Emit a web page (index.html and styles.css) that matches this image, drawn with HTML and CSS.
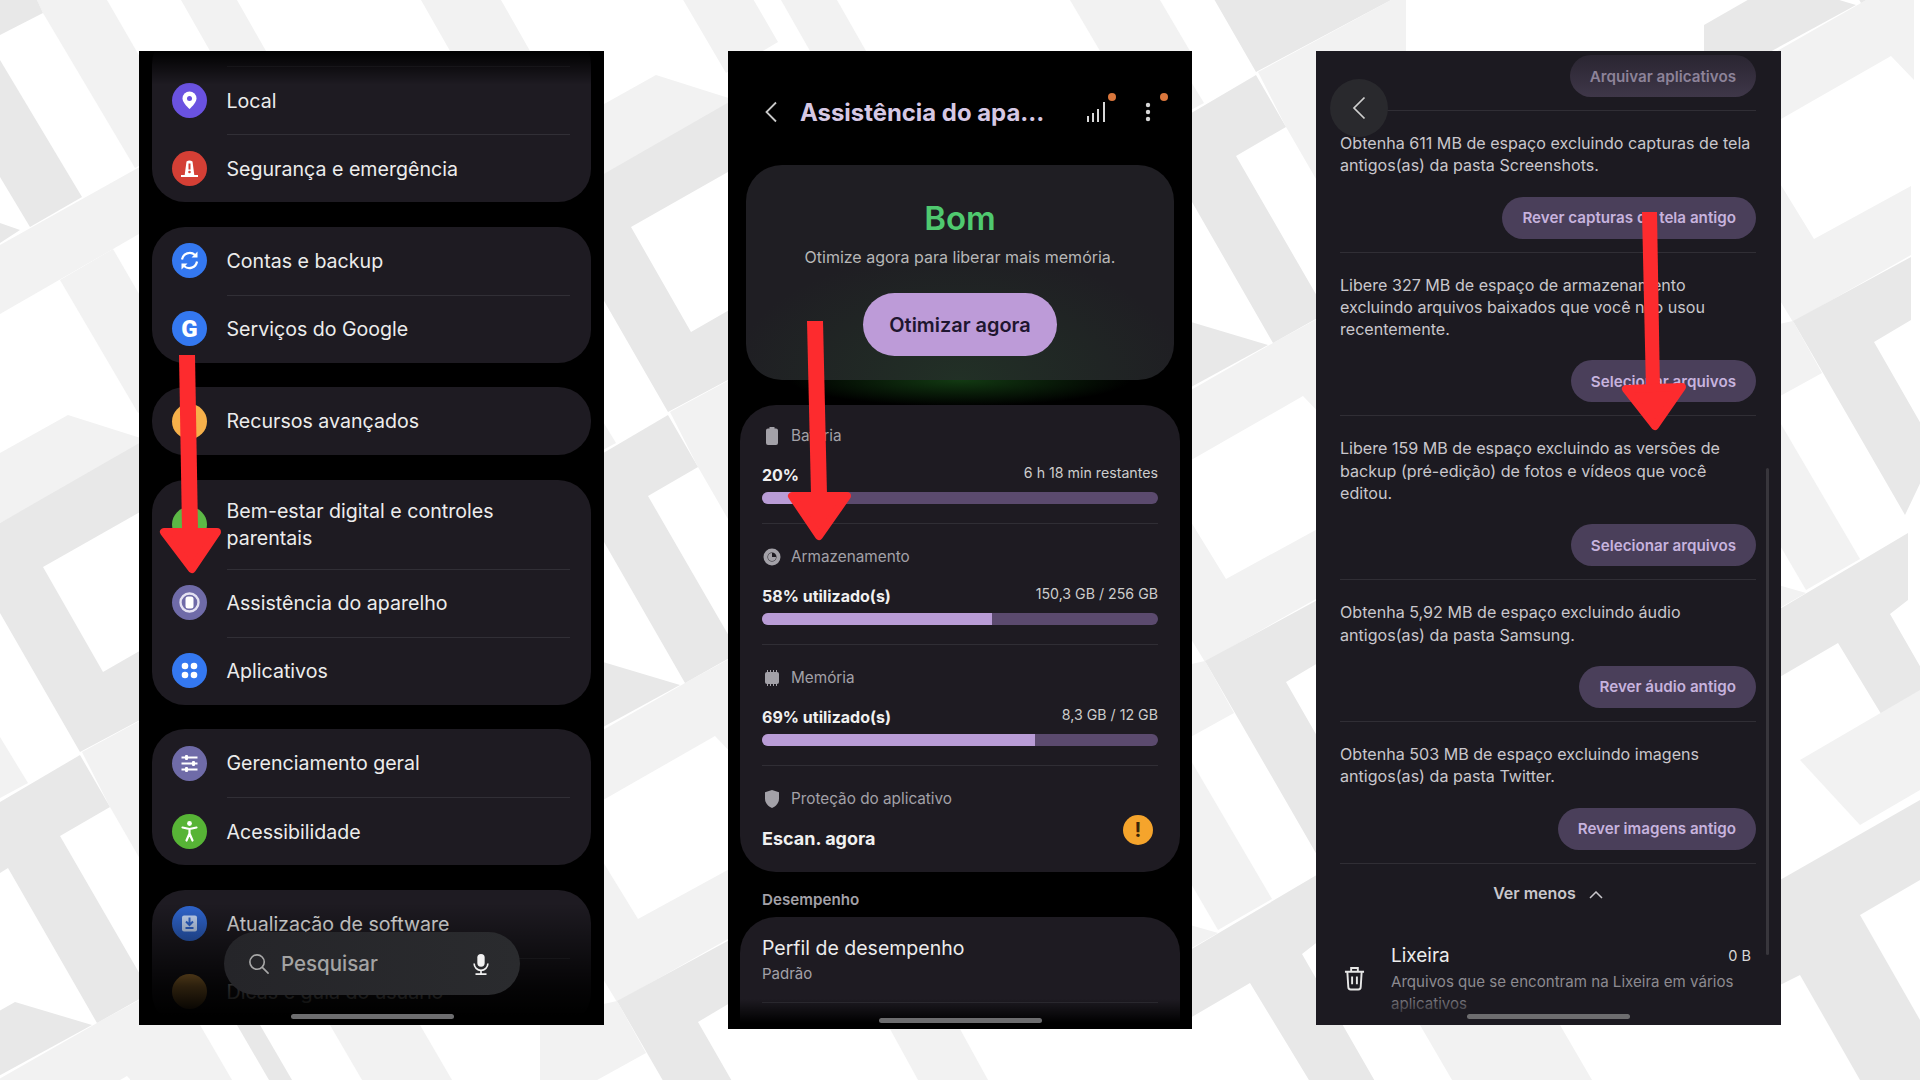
FILE: index.html
```html
<!DOCTYPE html>
<html lang="pt-BR">
<head>
  <meta charset="UTF-8">
  <title>Assistência do aparelho</title>
  <link rel="stylesheet" href="styles.css">
</head>
<body>
  <!-- background stripes, one band repeated along the diagonal -->
  <svg class="backdrop" viewBox="0 0 1920 1080" aria-hidden="true">
    <defs>
      <g id="band">
        <g fill="#f2f2f2">
          <polygon points="37,0 107,0 170,109 170,150 135,168 43,13"/>
          <polygon points="0,245 170,150 170,216 113,249 0,314"/>
          <polygon points="60,280 113,249 190,382 138,413"/>
          <polygon points="0,453 68,415 150,441 0,523"/>
          <polygon points="82,752 230,672 230,1015 110,807"/>
          <polygon points="0,737 28,783 0,798"/>
          <polygon points="-60,1113 97,1023 150,994 150,1100 127,1076 -60,1183"/>
          <polygon points="600,857 638,919 735,866 735,935 617,1002 600,974"/>
          <polygon points="540,1018 617,1001 646,1053 570,1095 540,1095"/>
          <polygon points="1190,759 1272,899 1218,930 1190,882"/>
          <polygon points="1190,925 1218,933 1190,949"/>
        </g>
        <g fill="#e8e8e8">
          <polygon points="0,0 37,0 43,13 0,35"/>
          <polygon points="0,60 82,197 30,227 0,177"/>
          <polygon points="0,223 20,230 0,243"/>
          <polygon points="0,523 230,391 230,461 43,567 103,672 230,599 230,672 80,752 0,613"/>
          <polygon points="0,802 80,755 110,807 60,836 145,983 145,996 97,1023 8,868 0,873"/>
          <polygon points="-60,1045 15,1002 92,1025 -60,1108"/>
          <polygon points="617,1001 735,937 735,1000 698,1022 760,1130 729,1195"/>
          <polygon points="1190,950 1320,873 1320,940 1302,954 1380,1090 1315,1090 1250,983 1190,1018"/>
        </g>
      </g>
    </defs>
    <use href="#band"/>
    <use href="#band" transform="translate(588 -340)"/>
    <use href="#band" transform="translate(1176 -680)"/>
    <use href="#band" transform="translate(1764 -1020)"/>
    <!-- strips above and below the phones, far right corner -->
    <g fill="#f2f2f2">
      <polygon points="181,0 237,0 266,51 210,51"/>
      <polygon points="421,0 501,0 530,51 450,51"/>
      <polygon points="781,0 837,0 866,51 810,51"/>
      <polygon points="1070,0 1160,0 1190,51 1100,51"/>
      <polygon points="130,1025 200,1025 232,1080 130,1080"/>
      <polygon points="330,1025 420,1025 452,1080 362,1080"/>
      <polygon points="890,1029 960,1029 988,1080 918,1080"/>
      <polygon points="1420,1025 1560,1025 1592,1080 1452,1080"/>
      <polygon points="1800,760 1920,690 1920,790 1860,825"/>
    </g>
    <g fill="#e8e8e8">
      <polygon points="237,1025 260,1025 292,1080 269,1080"/>
      <polygon points="1780,880 1920,800 1920,880 1860,915 1920,1020 1920,1080 1860,1080 1800,975 1780,985"/>
    </g>
  </svg>

  <div class="screens">

    <!-- settings list -->
    <section class="phone">
      <div class="settings">
        <div class="group group-first">
          <div class="row">
            <span class="dot dot-purple">
              <svg viewBox="0 0 35 35"><path fill="#fff" d="M17.5 8.5a7 7 0 0 0-7 7c0 4.5 7 10.5 7 10.5s7-6 7-10.5a7 7 0 0 0-7-7z"/><circle cx="17.5" cy="15.5" r="2.5" fill="#6a52e0"/></svg>
            </span>
            <span class="row-text">Local</span>
          </div>
          <div class="row">
            <span class="dot dot-red">
              <svg viewBox="0 0 35 35"><path fill="#fff" d="M14.5 10.5q3-2 6 0l1.8 13.5h3.7v2H9v-2h3.7z"/><rect x="16.5" y="12.5" width="2" height="6" fill="#d43f35"/><circle cx="17.5" cy="21" r="1.3" fill="#d43f35"/></svg>
            </span>
            <span class="row-text">Segurança e emergência</span>
          </div>
        </div>

        <div class="group">
          <div class="row">
            <span class="dot dot-blue">
              <svg viewBox="0 0 35 35"><g fill="none" stroke="#fff" stroke-width="2.2"><path d="M10 16.5a7.8 7.8 0 0 1 13-4.5"/><path d="M25 18.5a7.8 7.8 0 0 1-13 4.5"/></g><path fill="#fff" d="M25.5 8.5v6h-6zM9.5 26.5v-6h6z"/></svg>
            </span>
            <span class="row-text">Contas e backup</span>
          </div>
          <div class="row">
            <span class="dot dot-blue dot-letter">G</span>
            <span class="row-text">Serviços do Google</span>
          </div>
        </div>

        <div class="group">
          <div class="row">
            <span class="dot dot-orange"></span>
            <span class="row-text">Recursos avançados</span>
          </div>
        </div>

        <div class="group">
          <div class="row row-tall">
            <span class="dot dot-green"></span>
            <span class="row-text">Bem-estar digital e controles<br>parentais</span>
          </div>
          <div class="row">
            <span class="dot dot-slate">
              <svg viewBox="0 0 35 35"><circle cx="17.5" cy="17.5" r="9" fill="none" stroke="#e4e2f2" stroke-width="2.4"/><rect x="13.5" y="11.5" width="8" height="12" rx="2.5" fill="#fff"/></svg>
            </span>
            <span class="row-text">Assistência do aparelho</span>
          </div>
          <div class="row">
            <span class="dot dot-blue">
              <svg viewBox="0 0 35 35"><g fill="#fff"><circle cx="13" cy="13" r="3.3"/><circle cx="22" cy="13" r="3.3"/><circle cx="13" cy="22" r="3.3"/><circle cx="22" cy="22" r="3.3"/></g></svg>
            </span>
            <span class="row-text">Aplicativos</span>
          </div>
        </div>

        <div class="group">
          <div class="row">
            <span class="dot dot-slate">
              <svg viewBox="0 0 35 35"><g stroke="#fff" stroke-width="1.8"><path d="M9.5 11.5h16M9.5 17.5h16M9.5 23.5h16"/></g><g fill="#fff"><rect x="13" y="9" width="3" height="5" rx="1"/><rect x="20" y="15" width="3" height="5" rx="1"/><rect x="13" y="21" width="3" height="5" rx="1"/></g></svg>
            </span>
            <span class="row-text">Gerenciamento geral</span>
          </div>
          <div class="row">
            <span class="dot dot-lime">
              <svg viewBox="0 0 35 35"><circle cx="17.5" cy="9.5" r="2.4" fill="#fff"/><path fill="none" stroke="#fff" stroke-width="2.2" stroke-linecap="round" stroke-linejoin="round" d="M10.5 13.5l7 1.5 7-1.5M17.5 15v4.5M17.5 19.5l-3 7M17.5 19.5l3 7"/></svg>
            </span>
            <span class="row-text">Acessibilidade</span>
          </div>
        </div>

        <div class="group">
          <div class="row">
            <span class="dot dot-navy">
              <svg viewBox="0 0 35 35"><rect x="10" y="9.5" width="15" height="16" rx="2" fill="#c9dcfb"/><path fill="none" stroke="#2f66d0" stroke-width="2" d="M17.5 11.5v7M14 15.5l3.5 3.5 3.5-3.5M13.5 22h8"/></svg>
            </span>
            <span class="row-text">Atualização de software</span>
          </div>
          <div class="row">
            <span class="dot dot-orange"></span>
            <span class="row-text">Dicas e guia do usuário</span>
          </div>
        </div>
      </div>

      <div class="fade-top"></div>
      <div class="fade-bottom"></div>

      <div class="search">
        <svg class="search-glass" viewBox="0 0 24 24"><circle cx="10.5" cy="10.5" r="7.5" fill="none" stroke="#a8a8a8" stroke-width="1.7"/><path stroke="#a8a8a8" stroke-width="1.7" stroke-linecap="round" d="M16 16l6 6"/></svg>
        <span class="search-text">Pesquisar</span>
        <svg class="search-mic" viewBox="0 0 24 24"><rect x="8" y="1" width="8" height="14" rx="4" fill="#f2f2f2"/><path fill="none" stroke="#f2f2f2" stroke-width="1.8" d="M4.5 11.5a7.5 7.5 0 0 0 15 0M12 19v3M6 23h12"/></svg>
      </div>
      <div class="home-bar home-settings"></div>

      <svg class="arrow arrow-settings" viewBox="0 0 80 230"><path d="M29 5h16l3 175H32z"/><path class="arrow-head" d="M14 182h53l-25 37z"/></svg>
    </section>

    <!-- device care -->
    <section class="phone phone-care">
      <header class="care-top">
        <svg class="care-back" viewBox="0 0 14 22"><path fill="none" stroke="#c9c9c9" stroke-width="1.8" d="M12 1.5L2.5 11 12 20.5"/></svg>
        <h1 class="care-title">Assistência do apa...</h1>
        <span class="care-signal">
          <svg viewBox="0 0 18 20"><g fill="#d8d8d8"><rect x="0" y="14" width="2" height="6"/><rect x="5" y="11" width="2" height="9"/><rect x="10" y="7" width="2" height="13"/><rect x="16" y="0" width="2" height="20"/></g></svg>
          <i class="notice notice-signal"></i>
        </span>
        <span class="care-more">
          <svg viewBox="0 0 6 20"><g fill="#d8d8d8"><circle cx="3" cy="3" r="2.2"/><circle cx="3" cy="10" r="2.2"/><circle cx="3" cy="17" r="2.2"/></g></svg>
          <i class="notice notice-more"></i>
        </span>
      </header>

      <div class="score">
        <div class="score-word">Bom</div>
        <p class="score-hint">Otimize agora para liberar mais memória.</p>
        <button class="score-btn">Otimizar agora</button>
      </div>
      <div class="glow"></div>

      <div class="stats">
        <div class="stat stat-first">
          <div class="stat-label">
            <svg viewBox="0 0 16 18"><path fill="#a3a1a8" d="M5.5 0h5v1.5H12a2 2 0 0 1 2 2V16a2 2 0 0 1-2 2H4a2 2 0 0 1-2-2V3.5a2 2 0 0 1 2-2h1.5z"/></svg>
            Bateria
          </div>
          <div class="stat-values"><b>20%</b><span>6 h 18 min restantes</span></div>
          <div class="bar"><div class="bar-fill" style="width:20%"></div></div>
        </div>
        <div class="stat">
          <div class="stat-label">
            <svg viewBox="0 0 18 18"><circle cx="9" cy="9" r="6.5" fill="none" stroke="#a3a1a8" stroke-width="4"/><path fill="#a3a1a8" d="M9 5a4 4 0 1 0 4 4H9z"/></svg>
            Armazenamento
          </div>
          <div class="stat-values"><b>58% utilizado(s)</b><span>150,3 GB / 256 GB</span></div>
          <div class="bar"><div class="bar-fill" style="width:58%"></div></div>
        </div>
        <div class="stat">
          <div class="stat-label">
            <svg viewBox="0 0 18 18"><rect x="2" y="3" width="14" height="12" rx="2" fill="#a3a1a8"/><path stroke="#a3a1a8" d="M4.5 1v2M7.5 1v2M10.5 1v2M13.5 1v2M4.5 15v2M7.5 15v2M10.5 15v2M13.5 15v2"/></svg>
            Memória
          </div>
          <div class="stat-values"><b>69% utilizado(s)</b><span>8,3 GB / 12 GB</span></div>
          <div class="bar"><div class="bar-fill" style="width:69%"></div></div>
        </div>
        <div class="stat stat-last">
          <div class="stat-label">
            <svg viewBox="0 0 18 18"><path fill="#a3a1a8" d="M9 0l7 2.2v6.3c0 4.5-3 7.8-7 9.500-4-1.700-7-5-7-9.500V2.200z"/></svg>
            Proteção do aplicativo
          </div>
          <div class="stat-scan">
            <b>Escan. agora</b>
            <span class="warn">!</span>
          </div>
        </div>
      </div>

      <div class="perf-label">Desempenho</div>
      <div class="perf">
        <div class="perf-title">Perfil de desempenho</div>
        <div class="perf-value">Padrão</div>
        <div class="perf-line"></div>
      </div>

      <div class="fade-bottom fade-short"></div>
      <div class="home-bar home-care"></div>

      <svg class="arrow arrow-care" viewBox="0 0 80 230"><path d="M27 6h16l4 174H31z"/><path class="arrow-head" d="M12 181h55l-28 40z"/></svg>
    </section>

    <!-- free up storage -->
    <section class="phone phone-clean">
      <div class="tips">
        <div class="tip tip-first">
          <a class="pill pill-dim">Arquivar aplicativos</a>
        </div>
        <div class="tip">
          <p>Obtenha 611 MB de espaço excluindo capturas de tela antigos(as) da pasta Screenshots.</p>
          <a class="pill">Rever capturas de tela antigo</a>
        </div>
        <div class="tip">
          <p>Libere 327 MB de espaço de armazenamento excluindo arquivos baixados que você não usou recentemente.</p>
          <a class="pill">Selecionar arquivos</a>
        </div>
        <div class="tip">
          <p>Libere 159 MB de espaço excluindo as versões de backup (pré-edição) de fotos e vídeos que você editou.</p>
          <a class="pill">Selecionar arquivos</a>
        </div>
        <div class="tip">
          <p>Obtenha 5,92 MB de espaço excluindo áudio antigos(as) da pasta Samsung.</p>
          <a class="pill">Rever áudio antigo</a>
        </div>
        <div class="tip">
          <p>Obtenha 503 MB de espaço excluindo imagens antigos(as) da pasta Twitter.</p>
          <a class="pill">Rever imagens antigo</a>
        </div>
        <div class="see-less">
          Ver menos
          <svg viewBox="0 0 14 8"><path fill="none" stroke="#c9c7cc" stroke-width="1.5" d="M1 7l6-6 6 6"/></svg>
        </div>
        <div class="trash">
          <svg class="trash-icon" viewBox="0 0 22 26"><g fill="none" stroke="#e6e6e6" stroke-width="2"><path d="M1 6h20M7.5 5V2h7v3M3.5 6l1 16a2.5 2.5 0 0 0 2.5 2.5h8a2.5 2.5 0 0 0 2.5-2.5l1-16M8.5 11v8M13.5 11v8"/></g></svg>
          <div class="trash-body">
            <div class="trash-head"><span class="trash-name">Lixeira</span><span class="trash-size">0 B</span></div>
            <div class="trash-desc">Arquivos que se encontram na Lixeira em vários aplicativos</div>
          </div>
        </div>
      </div>

      <div class="round-back">
        <svg viewBox="0 0 14 24"><path fill="none" stroke="#cfcfcf" stroke-width="1.7" d="M12.5 1.5L2 12l10.5 10.5"/></svg>
      </div>
      <div class="scrollbar"></div>
      <div class="fade-clean"></div>
      <div class="home-bar home-clean"></div>

      <svg class="arrow arrow-clean" viewBox="0 0 80 230"><path d="M27 7h15l3 178H31z"/><path class="arrow-head" d="M11 184l56-2-27 39z"/></svg>
    </section>

  </div>
</body>
</html>
```

FILE: styles.css
```css
*{box-sizing:border-box;margin:0;padding:0}
html,body{width:1920px;height:1080px;overflow:hidden}
body{position:relative;background:#fff;font-family:'Inter','Liberation Sans',sans-serif;color:#ececec}

.backdrop{position:absolute;left:0;top:0;width:1920px;height:1080px}

.screens{position:relative;display:flex;align-items:flex-start;gap:124px;padding:51px 0 0 139px}
.phone{position:relative;flex:none;width:464.5px;height:974px;overflow:hidden;background:#000}

/* red arrows laid over the screens */
.arrow{position:absolute;width:80px;height:230px;fill:#fd2b2e;z-index:5}
.arrow-head{stroke:#fd2b2e;stroke-width:8;stroke-linejoin:round}
.arrow-settings{left:11px;top:299px}
.arrow-care{left:52.5px;top:264px}
.arrow-clean{left:299px;top:154px}

.home-bar{position:absolute;width:163px;height:5px;border-radius:3px;background:#6d6d6f;z-index:4}
.home-settings{left:152px;top:963px}
.home-care{left:151px;top:967px}
.home-clean{left:151px;top:963px}

.fade-top{position:absolute;left:0;right:0;top:0;height:34px;background:linear-gradient(#000,rgba(0,0,0,0))}
.fade-bottom{position:absolute;left:0;right:0;bottom:0;height:122px;background:linear-gradient(rgba(0,0,0,0),rgba(0,0,0,.82) 68%,#000 92%)}
.fade-short{height:30px;background:linear-gradient(rgba(0,0,0,0),#000 80%)}

/* settings */
.settings{display:flex;flex-direction:column;gap:24.5px;margin:-20px 12.5px 0}
.group{background:#1e1b22;border-radius:33px;overflow:hidden}
.group-first{padding-top:35px}
.row{display:flex;align-items:center;height:68px;padding:0 21px 0 20.5px;font-size:19.6px}
.row-tall{height:89px}
.row-text{display:flex;align-items:center;flex:1;height:100%;margin-left:19.5px;padding-top:2px;line-height:27.5px;color:#ececec}
.row + .row .row-text,.group-first .row-text{border-top:1px solid #312f36}
.dot{flex:none;display:flex;align-items:center;justify-content:center;width:35px;height:35px;border-radius:50%}
.dot svg{display:block;width:35px;height:35px}
.dot-purple{background:#6a52e0}
.dot-red{background:#d43f35}
.dot-blue{background:#3478f0}
.dot-orange{background:#f6b04a}
.dot-green{background:#5cb846}
.dot-slate{background:#6f6ba8}
.dot-lime{background:#57b436}
.dot-navy{background:#2f66d0}
.dot-letter{font-family:'Roboto',sans-serif;font-weight:900;font-size:24px;color:#fff}

.search{position:absolute;left:85px;top:881px;display:flex;align-items:center;width:296px;height:63px;border-radius:32px;background:linear-gradient(90deg,#252529,#2a2b2e);z-index:3}
.search-glass{width:23px;height:23px;margin-left:23px}
.search-text{margin-left:11px;font-size:20.5px;font-weight:500;color:#a3a3a3}
.search-mic{width:22px;height:24px;margin-left:auto;margin-right:28px}

/* device care */
.phone-care{height:978px}
.care-top{position:relative;display:flex;align-items:center;height:114px;padding:8px 0 0 36px}
.care-back{width:14px;height:22px}
.care-title{margin-left:22.5px;font-size:23.9px;font-weight:700;color:#d6c8e4;white-space:nowrap}
.care-signal{position:relative;margin-left:43px;width:18px;height:20px}
.care-signal svg,.care-more svg{display:block;width:100%;height:100%}
.care-more{position:relative;margin-left:40px;width:6px;height:20px}
.notice{position:absolute;width:8px;height:8px;border-radius:50%;background:#d9763c}
.notice-signal{right:-11px;top:-9px}
.notice-more{right:-17px;top:-9px}

.score{display:flex;flex-direction:column;align-items:center;width:428px;height:215px;margin-left:18.5px;padding-top:33px;border-radius:36px;background:radial-gradient(ellipse 230px 130px at 50% 100%,rgba(40,90,45,.3),rgba(40,90,45,0)),#1f1e23}
.score-word{font-size:33px;line-height:40px;font-weight:600;color:#4fc96f}
.score-hint{margin-top:7px;font-size:16px;line-height:24px;color:#b7b7b7}
.score-btn{width:194px;height:63px;margin-top:24px;border:none;border-radius:32px;background:#bd9bd8;color:#1f1630;font-family:inherit;font-size:19.9px;font-weight:600}
.glow{height:25px;background:radial-gradient(ellipse 170px 26px at 50% 0,#123a12,rgba(18,58,18,0))}

.stats{width:440px;height:467px;margin-left:12.5px;padding:0 22px;border-radius:36px;background:#1e1b22}
.stat{padding:21px 0 19px;border-bottom:1px solid #302e35}
.stat-first{padding-top:19px}
.stat-last{padding-bottom:0;border-bottom:none}
.stat-label{display:flex;align-items:center;gap:10px;height:22px;padding:1px 0 0 1px;font-size:15.3px;line-height:22px;color:#a3a1a8}
.stat-label svg{flex:none;width:18px;height:18px}
.stat-values{display:flex;justify-content:space-between;align-items:flex-start;height:26px;margin-top:15px;padding-top:1px;line-height:26px}
.stat-values b{font-size:16px;font-weight:700;color:#f0f0f0}
.stat-values span{font-size:14.2px;line-height:22px;color:#cdcdcd}
.bar{height:12px;margin-top:5px;border-radius:6px;overflow:hidden;background:#5b4a6e}
.bar-fill{height:100%;background:#b99cd6}
.stat-scan{display:flex;justify-content:space-between;height:35px;margin-top:6px;padding-right:5px}
.stat-scan b{align-self:flex-end;font-size:18px;line-height:22px;font-weight:700;color:#f0f0f0}
.warn{display:flex;align-items:center;justify-content:center;flex:none;width:30px;height:30px;border-radius:50%;background:#f5a42c;color:#3a2508;font-size:20px;font-weight:700}

.perf-label{margin:17px 0 6px 34.5px;font-size:15.2px;line-height:22px;font-weight:600;color:#a3a1a8}
.perf{width:440px;height:130px;margin-left:12.5px;padding:18px 22px 0;border-radius:36px 36px 0 0;background:#1e1b22}
.perf-title{font-size:19.5px;line-height:27px;color:#ececec}
.perf-value{font-size:15px;line-height:24px;color:#a3a1a8}
.perf-line{margin-top:16px;border-top:1px solid #302e35}

/* free up storage */
.phone-clean{background:#1c1a21}
.tips{padding:4px 24.5px 0 24px}
.tip{display:flex;flex-direction:column;align-items:flex-end;padding:21px 0 13px;border-bottom:1px solid #302e35}
.tip-first{padding-top:0}
.tip p{align-self:stretch;margin-bottom:20px;font-size:16.1px;line-height:22.3px;color:#c9c7cc}
.pill{display:flex;align-items:center;height:42px;padding:0 20px;border-radius:21px;background:#4a3f5a;font-size:15.2px;font-weight:600;color:#c7b3de}
.pill-dim{background:linear-gradient(#2a2531,#3f3749);color:#8d8399}
.see-less{display:flex;align-items:center;justify-content:center;gap:13px;height:62px;padding-bottom:4px;font-size:16px;font-weight:600;color:#c9c7cc}
.see-less svg{width:14px;height:8px;margin-top:5px}
.trash{display:flex;margin-top:16px}
.trash-icon{flex:none;align-self:center;width:21px;height:25px;margin-left:4px}
.trash-body{flex:1;margin-left:26px;padding-right:5px}
.trash-head{display:flex;justify-content:space-between;align-items:center;line-height:28px}
.trash-name{font-size:19px;color:#ececec}
.trash-size{font-size:14.5px;color:#d8d8d8}
.trash-desc{padding-top:1px;font-size:15.1px;line-height:22px;color:#8c8a90}
.round-back{position:absolute;left:14px;top:28px;display:flex;align-items:center;justify-content:center;width:58px;height:58px;border-radius:50%;background:#29292d;z-index:2}
.round-back svg{width:14px;height:24px}
.scrollbar{position:absolute;left:450px;top:417px;width:3px;height:487px;border-radius:2px;background:#38363c}
.fade-clean{position:absolute;left:0;right:0;bottom:0;height:30px;background:linear-gradient(rgba(28,26,33,0),#1c1a21 85%);z-index:1}
```
